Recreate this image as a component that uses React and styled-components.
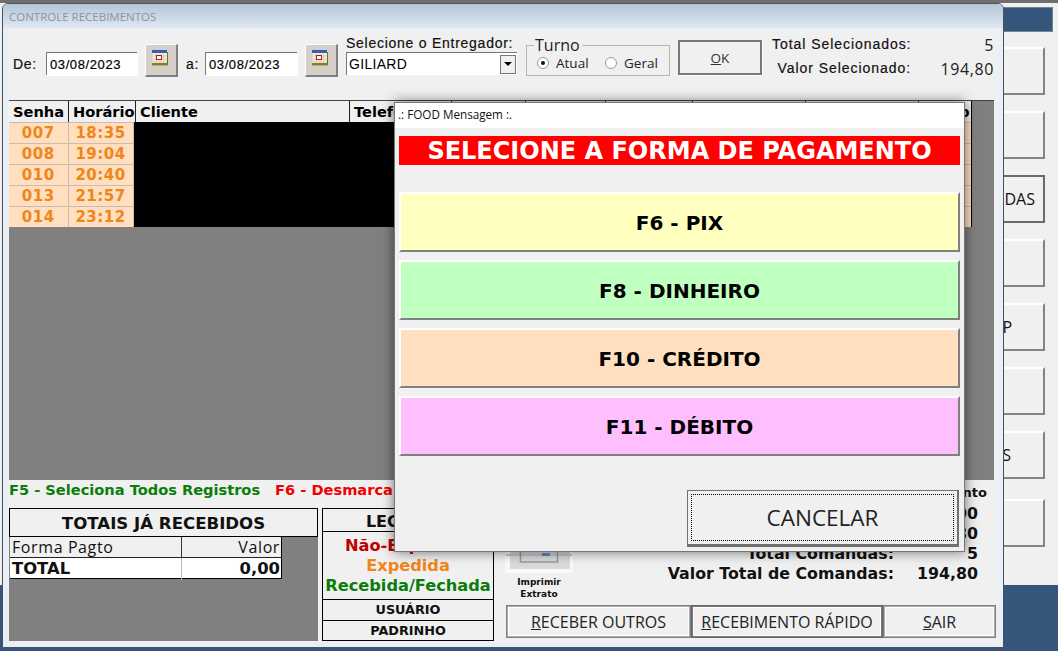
import React from 'react';
import styled, { createGlobalStyle } from 'styled-components';

const Global = createGlobalStyle`
  * { box-sizing: border-box; }
  html, body { margin: 0; padding: 0; }
  body { width: 1058px; height: 651px; overflow: hidden; background: #35557b; }
`;
const Verdana = `"DejaVu Sans", sans-serif`;
const Tahoma = `"Open Sans", "Noto Sans", sans-serif`;
const Sans = `"Liberation Sans", Arial, sans-serif`;

const Desktop = styled.div`position: relative; width: 1058px; height: 651px; overflow: hidden; background: #35557b;`;
const BackWindow = styled.div`
  height: 585px; background: #f0f0f0; border-top: 3px solid #6e6e6e; padding-top: 4px;
  display: flex; flex-direction: column; align-items: flex-end;
`;
const BackTitle = styled.div`width: 900px; height: 25px; margin-right: 5px; flex: none; background: #35557b; border: 1px solid #77838f; border-left: 0;`;
const BackButtons = styled.div`display: flex; flex-direction: column; gap: 16px; padding: 15px 13px 0 0;`;
const BackButton = styled.div`
  width: 200px; height: 48px; display: flex; align-items: center; justify-content: flex-end;
  padding-right: ${p => p.$inset || 0}px; margin-top: ${p => p.$extra || 0}px;
  font: 16px ${Tahoma}; color: #111; background: #f0f0f0;
  border-top: 2px solid ${p => (p.$active ? '#6a6a6a' : '#fff')};
  border-right: 2px solid ${p => (p.$active ? '#6a6a6a' : '#848484')};
  border-bottom: 2px solid ${p => (p.$active ? '#6a6a6a' : '#848484')};
`;

const MainWindow = styled.div`
  position: absolute; left: 2px; top: 3px; width: 1002px; height: 645px;
  border: 1px solid #4a525c; border-radius: 6px 6px 0 0; background: #e9eff6;
  padding: 0 4px 4px 5px; display: flex; flex-direction: column;
`;
const TitleBar = styled.div`
  height: 24px; margin: 0 -4px 0 -5px; padding-left: 6px; flex: none; display: flex; align-items: center;
  background: linear-gradient(#b6c6d7, #dde8f2); border-radius: 5px 5px 0 0;
  font: 11.5px ${Tahoma}; color: #8d949c;
`;
const Content = styled.div`flex: 1; background: #f0f0f0; padding-left: 1px; display: flex; flex-direction: column; min-height: 0;`;
const FilterRow = styled.div`height: 72px; flex: none; padding-bottom: 23px; padding-left: 4px; display: flex; align-items: flex-end;`;
const FieldLabel = styled.div`
  width: ${p => p.$w}px; flex: none; height: 26px; display: flex; align-items: center;
  font: 14px ${Sans}; letter-spacing: .7px; color: #111; -webkit-text-stroke: .2px #111;
`;
const DateInput = styled.div`
  width: ${p => p.$w}px; height: 23px; flex: none; margin-bottom: 2px; display: flex; align-items: center; padding-left: 3px;
  background: #fff; border-top: 1px solid #777; border-left: 1px solid #777;
  box-shadow: 1px 1px 0 #fff; font: 13px ${Sans}; letter-spacing: .6px; color: #000; -webkit-text-stroke: .2px #000;
`;
const CalendarButton = styled.div`
  width: 33px; height: 33px; flex: none; margin-left: 8px; padding: 5px 0 0 6px; background: #d4d0c8;
  border-top: 1px solid #fff; border-left: 1px solid #fff; border-right: 2px solid #808080; border-bottom: 2px solid #808080;
`;
const Gap = styled.div`width: ${p => p.$w}px; flex: none;`;
const EntregadorField = styled.div`width: 171px; flex: none; margin-left: 8px; margin-bottom: 2px; display: flex; flex-direction: column;`;
const ComboLabel = styled.div`font: 14px ${Sans}; letter-spacing: .74px; color: #111; -webkit-text-stroke: .2px #111; line-height: 16px; margin-bottom: 1px; white-space: nowrap;`;
const Combo = styled.div`
  height: 23px; background: #fff; border-top: 1px solid #777; border-left: 1px solid #777; display: flex; align-items: center; justify-content: space-between;
  padding: 1px 1px 1px 2px; font: 14px ${Sans}; letter-spacing: .3px; color: #000;
`;
const ComboArrow = styled.div`
  width: 16px; height: 19px; background: #f0f0f0; border: 1px solid #777; display: flex; align-items: center; justify-content: center;
  &::after { content: ''; border: 4px solid transparent; border-top: 4px solid #000; border-bottom: 0; }
`;
const TurnoBox = styled.fieldset`
  width: 144px; height: 40px; flex: none; margin: 0 0 1px 9px; padding: 0 0 0 10px; border: 1px solid #b5b5b5; display: flex; align-items: center; gap: 6px;
  legend { font: 16px/18px ${Tahoma}; padding: 0 2px 0 1px; margin-left: -3px; color: #222; }
`;
const RadioRow = styled.div`display: flex; align-items: center; margin-top: -3px; gap: 0;`;
const Radio = styled.span`
  width: 12px; height: 12px; border-radius: 50%; background: #fff; border: 1px solid #9a9a9a; margin-right: 7px; display: flex; align-items: center; justify-content: center;
  &::after { content: ''; width: 4px; height: 4px; border-radius: 50%; background: ${p => (p.$on ? '#111' : 'transparent')}; }
`;
const RadioText = styled.span`font: 13.5px ${Tahoma}; color: #222; width: ${p => p.$w}px;`;
const OkButton = styled.div`
  width: 84px; height: 35px; flex: none; margin: 0 0 2px 8px; display: flex; align-items: center; justify-content: center;
  border: 2px solid #787878; box-shadow: 1px 1px 0 #fff; font: 13.5px ${Tahoma}; color: #333;
`;
const Totals = styled.div`
  width: 223px; flex: none; margin: 0 0 -3px 10px; display: grid; grid-template-columns: 139px 83px; grid-auto-rows: 24px; align-items: center;
`;
const TotalLabel = styled.div`font: 14px ${Sans}; letter-spacing: .95px; color: #111; -webkit-text-stroke: .2px #111; text-align: right; white-space: nowrap;`;
const TotalValue = styled.div`font: 16px ${Tahoma}; letter-spacing: .6px; color: #222; text-align: right; padding-top: 1px;`;

const GridPanel = styled.div`height: 380px; width: 985px; flex: none; background: #808080; border-top: 1px solid #444;`;
const HeaderRow = styled.div`
  width: 962.5px; height: 20.5px; display: grid; grid-template-columns: 60px 67px 214px 102px 74px 80px 87px 113px 113px 1fr;
  background: #f0f0f0; border-right: 1px solid #000;
`;
const HeaderCell = styled.div`
  padding-left: ${p => p.$pad ?? 4}px; border-right: 1px solid #222; font: bold 14.6px/22px ${Verdana}; color: #000; overflow: hidden; white-space: nowrap;
  &:last-child { border-right: 0; text-align: right; padding-right: 1px; }
`;
const DataRow = styled.div`
  width: 962.5px; height: 21px; display: grid; grid-template-columns: 59.5px 65px 1fr 6px; background: #000; border-right: 1px solid #000;
`;
const DataCell = styled.div`
  background: #ffdfbf; border: solid #cdbcae; border-width: 1px 1px 0 0; color: #f08518; font: bold 15px/20px ${Verdana}; letter-spacing: .5px; text-align: center;
`;
const BlackCell = styled.div`background: #000;`;
const TanCell = styled.div`background: #ffdfbf; border-top: 1px solid #cdbcae;`;

const BottomArea = styled.div`flex: 1; display: flex; min-height: 0;`;
const LeftPart = styled.div`width: 485px; flex: none; display: flex; flex-direction: column;`;
const HintRow = styled.div`height: 20px; display: flex; gap: 15px; font: bold 14.6px/20px ${Verdana}; white-space: nowrap; overflow: hidden;`;
const Hint = styled.span`color: ${p => p.$c};`;
const Panels = styled.div`margin-top: 8px; height: 133px; display: flex; gap: 4px;`;
const TotalsPanel = styled.div`width: 309px; flex: none; background: #808080;`;
const TotalsHead = styled.div`height: 29px; border: 1px solid #000; background: #f0f0f0; font: bold 16.6px/29px ${Verdana}; color: #111; text-align: center; white-space: nowrap;`;
const PayRow = styled.div`
  width: 272px; margin-left: 1px; height: 21px; display: grid; grid-template-columns: 172px 1fr;
  background: ${p => (p.$total ? '#fff' : '#f0f0f0')}; border-bottom: ${p => (p.$total ? '1px solid #000' : '0')}; border-right: 1px solid #000;
`;
const PayCell = styled.div`
  padding: 0 1px 0 2px;
  font: ${p => (p.$total ? `bold 16.4px/22px ${Verdana}` : `16px/20px ${Tahoma}`)};
  letter-spacing: ${p => (p.$total ? '0' : '.6px')};
  color: #111; text-align: ${p => (p.$right ? 'right' : 'left')};
  border-right: ${p => (p.$right ? '0' : p.$total ? '1px solid #bbb' : '1px solid #333')};
  border-bottom: ${p => (p.$total ? '0' : '1px solid #222')};
`;
const LegendBox = styled.div`width: 172px; flex: none; height: 133px; border: 1px solid #000; display: flex; flex-direction: column;`;
const LegendHead = styled.div`height: 23px; flex: none; font: bold 16px/26px ${Verdana}; color: #111; text-align: center; border-bottom: 1px solid #000;`;
const LegendStates = styled.div`height: 68px; flex: none; padding-top: 4px; border-bottom: 1px solid #000; text-align: center;`;
const LegendState = styled.div`font: bold 16.2px/20px ${Verdana}; color: ${p => p.$c}; white-space: nowrap;`;
const LegendFoot = styled.div`flex: 1; font: bold 12.8px/20px ${Verdana}; color: #111; text-align: center; & + & { border-top: 1px solid #000; }`;

const RightPart = styled.div`width: 491px; flex: none; margin-left: 11px; display: flex; flex-direction: column;`;
const StatsRow = styled.div`display: flex; height: 125px; position: relative;`;
const Extract = styled.div`width: 68px; flex: none; margin-top: 33px; display: flex; flex-direction: column; align-items: center;`;
const ExtractCaption = styled.div`margin-top: 3px; font: bold 9px/12px ${Verdana}; color: #111; text-align: center;`;
const StatList = styled.div`flex: 1; padding-top: 3px; display: flex; flex-direction: column;`;
const StatHead = styled.div`height: 21px; padding-right: 9px; text-align: right; font: bold 13px/20px ${Verdana}; color: #111;`;
const StatLine = styled.div`height: 20px; display: flex; justify-content: flex-end; padding-right: 18px; font: bold 15.8px/20px ${Verdana}; color: #111; white-space: nowrap;`;
const StatValue = styled.span`width: 84px; text-align: right;`;
const ActionBar = styled.div`margin-top: auto; margin-bottom: 5px; margin-left: 1px; display: flex;`;
const ActionButton = styled.div`
  width: ${p => p.$w}px; height: 33px; flex: none; display: flex; align-items: center; justify-content: center;
  border: 1px solid ${p => (p.$active ? '#666' : '#808080')};
  box-shadow: inset 1px 1px 0 ${p => (p.$active ? '#777' : '#aaa')}, inset -1px -1px 0 ${p => (p.$active ? '#777' : '#aaa')}, inset 2px 2px 0 #fff, inset -2px -2px 0 #fff;
  font: 16px ${Tahoma}; color: #222; white-space: nowrap;
`;

const Dialog = styled.div`
  position: absolute; left: 394px; top: 102px; width: 571px; height: 450px; background: #f0f0f0; border: 1px solid #777;
  box-shadow: 0 0 12px rgba(0,0,0,.55); display: flex; flex-direction: column;
`;
const DialogTitle = styled.div`height: 25px; flex: none; background: #fff; padding-left: 3px; font: 11.7px/23px ${Tahoma}; color: #111;`;
const DialogBody = styled.div`flex: 1; padding: 8px 4px 0 4px; display: flex; flex-direction: column;`;
const RedBanner = styled.div`height: 29px; background: #ff0000; color: #fff; text-align: center; font: bold 24px/31px ${Verdana}; margin-bottom: 27px; white-space: nowrap;`;
const PayButtons = styled.div`display: flex; flex-direction: column; gap: 8px;`;
const PayButton = styled.div`
  height: 60px; display: flex; align-items: center; justify-content: center; padding-top: 2px; background: ${p => p.$bg};
  border-top: 2px solid #fff; border-left: 2px solid #fff; border-right: 2px solid #808080; border-bottom: 2px solid #808080;
  font: bold 20px ${Verdana}; color: #000;
`;
const CancelButton = styled.div`
  width: 272px; height: 57px; margin-top: 34px; align-self: flex-end; margin-right: 1px; padding: 3px; border: 1px solid #707070; border-right-width: 2px; border-bottom-width: 3px;
`;
const CancelFocus = styled.div`
  height: 100%; border: 1px dotted #000; display: flex; align-items: center; justify-content: center; font: 22.5px ${Tahoma}; color: #222;
`;

const CalendarIcon = () => (
  <svg width="16" height="16" viewBox="0 0 16 16" style={{ display: 'block' }}>
    <rect x="0.5" y="0.5" width="15" height="15" fill="#f6efd0" />
    <rect x="0" y="0" width="15" height="3" fill="#2c5fc4" />
    <path d="M0 6h15M0 9h15M0 12h15M4 3v10M8 3v10M11.5 3v10" stroke="#d9cfa6" strokeWidth="1" />
    <rect x="4.5" y="5.5" width="5" height="4" fill="#fff" stroke="#c01030" />
    <rect x="0" y="13" width="16" height="2.5" fill="#81803e" />
    <rect x="15" y="2" width="1" height="12" fill="#6e6e3a" />
  </svg>
);

const PrinterIcon = () => (
  <svg width="68" height="60" viewBox="0 0 68 60" style={{ display: 'block' }}>
    <rect width="68" height="60" fill="#f9f9f9" />
    <rect x="5" y="5" width="60" height="51" fill="#dadadc" />
    <rect x="1" y="41" width="66" height="2" fill="#c4c6ca" />
    <rect x="15.5" y="20" width="37" height="29" fill="none" stroke="#9a9a9c" strokeWidth="1.5" />
    <rect x="37" y="40" width="8" height="3" fill="#5a8cc0" />
  </svg>
);

const rows = [['007', '18:35'], ['008', '19:04'], ['010', '20:40'], ['013', '21:57'], ['014', '23:12']];
const headers = ['Senha', 'Horário', 'Cliente', 'Telefone', '', '', '', '', '', 'o'];

export default function App() {
  return (
    <Desktop>
      <Global />
      <BackWindow>
        <BackTitle />
        <BackButtons>
          <BackButton />
          <BackButton />
          <BackButton $active $inset={8}>COMANDAS</BackButton>
          <BackButton />
          <BackButton $inset={31}>WHATSAPP</BackButton>
          <BackButton />
          <BackButton $inset={32}>CLIENTES</BackButton>
          <BackButton $extra={4} />
        </BackButtons>
      </BackWindow>

      <MainWindow>
        <TitleBar>CONTROLE RECEBIMENTOS</TitleBar>
        <Content>
          <FilterRow>
            <FieldLabel $w={33}>De:</FieldLabel>
            <DateInput $w={91}>03/08/2023</DateInput>
            <CalendarButton><CalendarIcon /></CalendarButton>
            <Gap $w={8} />
            <FieldLabel $w={19}>a:</FieldLabel>
            <DateInput $w={92}>03/08/2023</DateInput>
            <CalendarButton><CalendarIcon /></CalendarButton>
            <EntregadorField>
              <ComboLabel>Selecione o Entregador:</ComboLabel>
              <Combo>GILIARD<ComboArrow /></Combo>
            </EntregadorField>
            <TurnoBox>
              <legend>Turno</legend>
              <RadioRow>
                <Radio $on /><RadioText $w={49}>Atual</RadioText>
                <Radio /><RadioText $w={40}>Geral</RadioText>
              </RadioRow>
            </TurnoBox>
            <OkButton><span><u>O</u>K</span></OkButton>
            <Totals>
              <TotalLabel>Total Selecionados:</TotalLabel><TotalValue>5</TotalValue>
              <TotalLabel>Valor Selecionado:</TotalLabel><TotalValue>194,80</TotalValue>
            </Totals>
          </FilterRow>

          <GridPanel>
            <HeaderRow>
              {headers.map((h, i) => <HeaderCell key={i} $pad={4}>{h}</HeaderCell>)}
            </HeaderRow>
            {rows.map(([s, t]) => (
              <DataRow key={s}>
                <DataCell>{s}</DataCell>
                <DataCell>{t}</DataCell>
                <BlackCell />
                <TanCell />
              </DataRow>
            ))}
          </GridPanel>

          <BottomArea>
            <LeftPart>
              <HintRow>
                <Hint $c="#0a7d0a">F5 - Seleciona Todos Registros</Hint>
                <Hint $c="#f00000">F6 - Desmarca Todos</Hint>
              </HintRow>
              <Panels>
                <TotalsPanel>
                  <TotalsHead>TOTAIS JÁ RECEBIDOS</TotalsHead>
                  <PayRow>
                    <PayCell>Forma Pagto</PayCell>
                    <PayCell $right>Valor</PayCell>
                  </PayRow>
                  <PayRow $total>
                    <PayCell $total>TOTAL</PayCell>
                    <PayCell $total $right>0,00</PayCell>
                  </PayRow>
                </TotalsPanel>
                <LegendBox>
                  <LegendHead>LEGENDA</LegendHead>
                  <LegendStates>
                    <LegendState $c="#c00000">Não-Expedida</LegendState>
                    <LegendState $c="#f08518">Expedida</LegendState>
                    <LegendState $c="#0a7d0a">Recebida/Fechada</LegendState>
                  </LegendStates>
                  <LegendFoot>USUÁRIO</LegendFoot>
                  <LegendFoot>PADRINHO</LegendFoot>
                </LegendBox>
              </Panels>
            </LeftPart>
            <RightPart>
              <StatsRow>
                <Extract>
                  <PrinterIcon />
                  <ExtractCaption>Imprimir<br />Extrato</ExtractCaption>
                </Extract>
                <StatList>
                  <StatHead>Pagamento</StatHead>
                  <StatLine>Total Desconto:<StatValue>0,00</StatValue></StatLine>
                  <StatLine>Total Recebido:<StatValue>194,80</StatValue></StatLine>
                  <StatLine>Total Comandas:<StatValue>5</StatValue></StatLine>
                  <StatLine>Valor Total de Comandas:<StatValue>194,80</StatValue></StatLine>
                </StatList>
              </StatsRow>
              <ActionBar>
                <ActionButton $w={185}><span><u>R</u>ECEBER OUTROS</span></ActionButton>
                <ActionButton $w={192} $active><span><u>R</u>ECEBIMENTO RÁPIDO</span></ActionButton>
                <ActionButton $w={113}><span><u>S</u>AIR</span></ActionButton>
              </ActionBar>
            </RightPart>
          </BottomArea>
        </Content>
      </MainWindow>

      <Dialog>
        <DialogTitle>.: FOOD Mensagem :.</DialogTitle>
        <DialogBody>
          <RedBanner>SELECIONE A FORMA DE PAGAMENTO</RedBanner>
          <PayButtons>
            <PayButton $bg="#ffffc0">F6 - PIX</PayButton>
            <PayButton $bg="#bfffbf">F8 - DINHEIRO</PayButton>
            <PayButton $bg="#ffdfbf">F10 - CRÉDITO</PayButton>
            <PayButton $bg="#ffbfff">F11 - DÉBITO</PayButton>
          </PayButtons>
          <CancelButton><CancelFocus>CANCELAR</CancelFocus></CancelButton>
        </DialogBody>
      </Dialog>
    </Desktop>
  );
}
